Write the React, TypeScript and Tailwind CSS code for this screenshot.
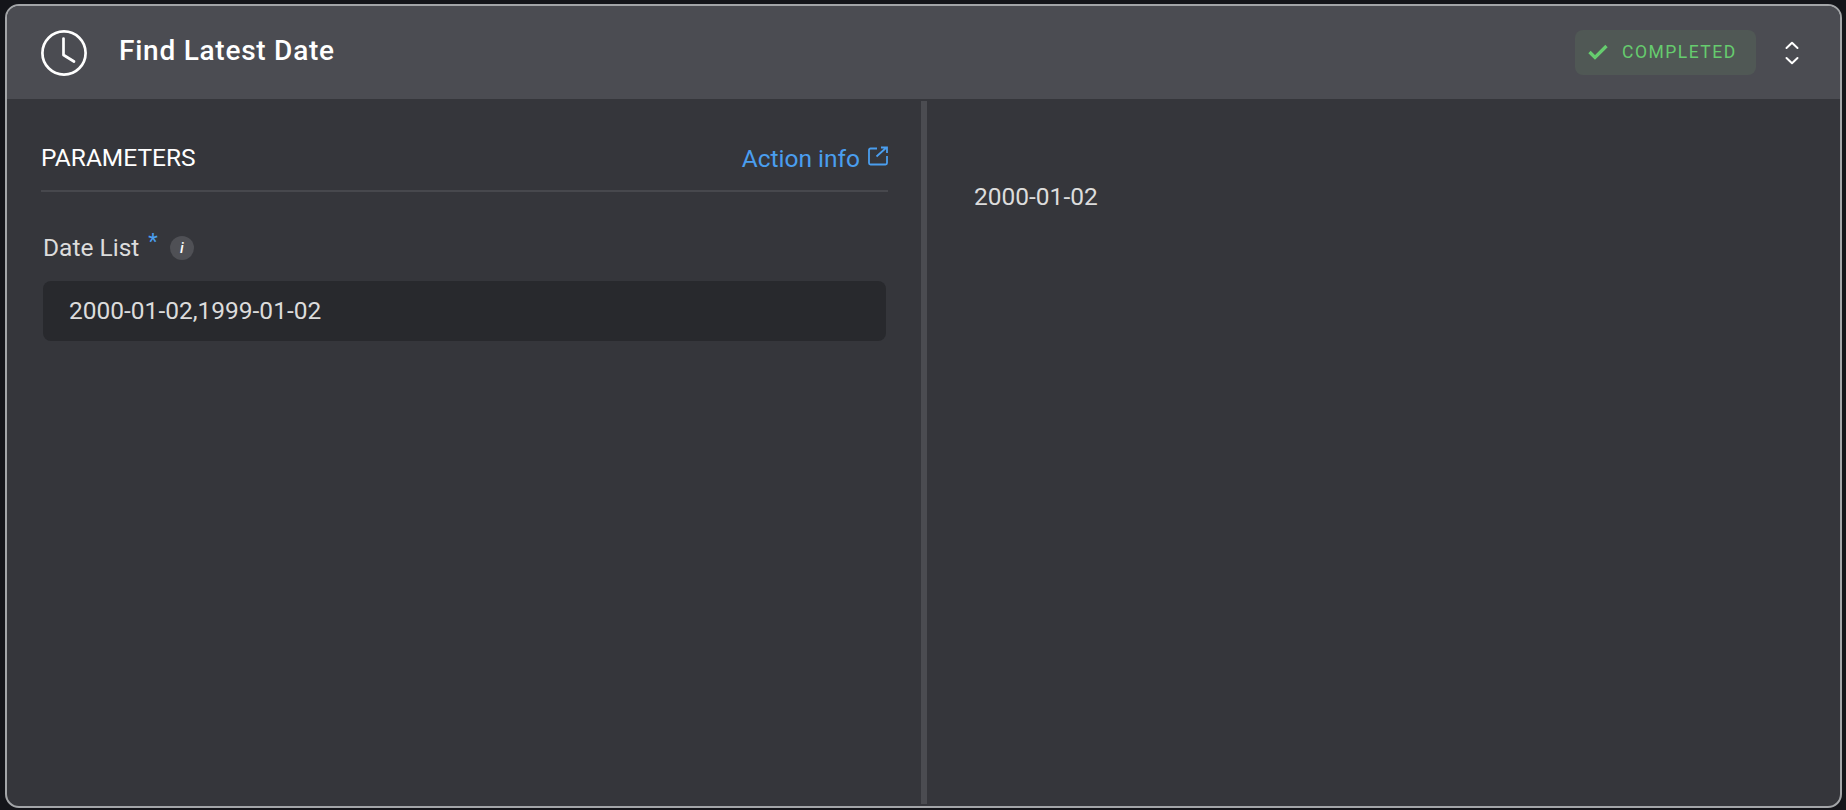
import React from 'react';

const App: React.FC = () => {
  return (
    <div className="font-['Roboto',sans-serif] w-[1846px] h-[810px] bg-[#14151a] pl-[5px] pr-[4px] pt-[4px] pb-[2px] overflow-hidden">
      <div className="flex flex-col h-full rounded-[14px] border-2 border-[#a3a5a8] bg-[#35363b] overflow-hidden">
        <div className="flex items-center h-[93px] shrink-0 bg-[#4b4c52] pl-[34px] pr-[40px]">
          <svg width="46" height="46" viewBox="0 0 46 46" fill="none" stroke="#fff" strokeWidth="2.7" strokeLinecap="round" strokeLinejoin="round" className="shrink-0">
            <circle cx="23" cy="23" r="21.6" />
            <path d="M22.5 8.5V25L33 31.5" />
          </svg>
          <h1 className="ml-[32px] mb-[3px] text-[28px] font-medium tracking-[0.75px] text-white">Find Latest Date</h1>
          <div className="ml-auto flex items-center w-[181px] h-[45px] rounded-lg bg-[#505855] pl-[13px]">
            <svg width="20" height="16" viewBox="0 0 20 16" fill="none" stroke="#66cc6e" strokeWidth="3.3" className="shrink-0 -mt-[1px]">
              <path d="M1.5 8L7 13.5L18.5 2" />
            </svg>
            <span className="ml-[14px] text-[17.5px] tracking-[1.5px] text-[#66cc6e]">COMPLETED</span>
          </div>
          <div className="ml-[28px] flex justify-center w-[16px]">
            <svg width="14" height="24" viewBox="0 0 14 24" fill="none" stroke="#fff" strokeWidth="2" strokeLinecap="round" strokeLinejoin="round">
              <path d="M1.5 7L7 1.8L12.5 7" />
              <path d="M1.5 17L7 22.2L12.5 17" />
            </svg>
          </div>
        </div>
        <div className="flex flex-1 min-h-0 pt-[2px] pb-[2px]">
          <div className="w-[914px] shrink-0 pl-[34px] pr-[33px]">
            <div className="flex items-end justify-between h-[91px] pb-[13px] border-b-2 border-[#47484d]">
              <span className="text-[24.5px] text-white">PARAMETERS</span>
              <a className="flex items-start -mb-[1px] text-[24.5px] text-[#4a9eef]">
                Action info
                <svg width="20" height="20" viewBox="0 0 20 20" fill="none" stroke="#4a9eef" strokeWidth="1.8" className="ml-[8px] mt-[5px]">
                  <path d="M9 2.5H2.5A1.5 1.5 0 0 0 1 4V17A1.5 1.5 0 0 0 2.5 18.5H17.5A1.5 1.5 0 0 0 19 17V10" />
                  <path d="M8.5 10.5L18.5 1.5M13 1.5H19V7" />
                </svg>
              </a>
            </div>
            <div className="flex items-center mt-[38px] pl-[2px] h-[36px]">
              <span className="text-[24.5px] text-[#dcdcdc]">Date List</span>
              <span className="ml-[9px] -mt-[12px] text-[22px] leading-none text-[#4a9eef]">*</span>
              <span className="ml-[12px] flex items-center justify-center w-[24px] h-[24px] rounded-full bg-[#4f5055] text-[15px] italic font-medium text-white">i</span>
            </div>
            <div className="flex items-center mt-[15px] ml-[2px] mr-[2px] h-[60px] rounded-lg bg-[#28292d] pl-[26px] text-[24.5px] text-[#dcdcdc]">
              2000-01-02,1999-01-02
            </div>
          </div>
          <div className="w-[6px] shrink-0 bg-[#4b4c51]" />
          <div className="flex-1 pl-[47px] pt-[82px] text-[24.5px] leading-[28px] text-[#dcdcdc]">2000-01-02</div>
        </div>
      </div>
    </div>
  );
};

export default App;
